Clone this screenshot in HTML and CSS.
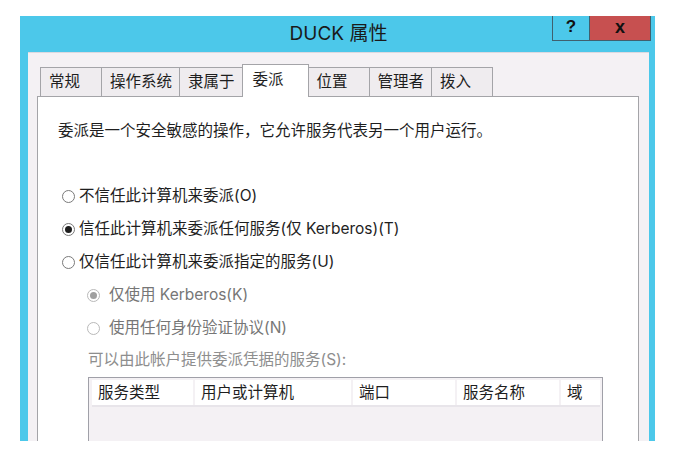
FILE: index.html
```html
<!DOCTYPE html>
<html lang="zh-CN">
<head>
<meta charset="utf-8">
<title>DUCK 属性</title>
<link rel="stylesheet" href="styles.css">
</head>
<body>
<div class="window">
  <div class="titlebar">
    <div class="spacer"></div>
    <div class="title">DUCK 属性</div>
    <div class="controls">
      <div class="btn help">?</div>
      <div class="btn close">x</div>
    </div>
  </div>
  <div class="panel">
    <div class="tabs">
      <div class="tab">常规</div>
      <div class="tab">操作系统</div>
      <div class="tab">隶属于</div>
      <div class="tab active">委派</div>
      <div class="tab">位置</div>
      <div class="tab">管理者</div>
      <div class="tab">拨入</div>
    </div>
    <div class="page">
      <p class="desc">委派是一个安全敏感的操作，它允许服务代表另一个用户运行。</p>
      <div class="options">
        <div class="opt"><span class="radio"></span>不信任此计算机来委派(O)</div>
        <div class="opt"><span class="radio checked"></span>信任此计算机来委派任何服务(仅 Kerberos)(T)</div>
        <div class="opt"><span class="radio"></span>仅信任此计算机来委派指定的服务(U)</div>
        <div class="opt sub disabled"><span class="radio checked"></span>仅使用 Kerberos(K)</div>
        <div class="opt sub disabled"><span class="radio"></span>使用任何身份验证协议(N)</div>
      </div>
      <div class="label">可以由此帐户提供委派凭据的服务(S):</div>
      <div class="table">
        <div class="thead">
          <div class="th">服务类型</div>
          <div class="th">用户或计算机</div>
          <div class="th">端口</div>
          <div class="th">服务名称</div>
          <div class="th">域</div>
        </div>
        <div class="tbody"></div>
      </div>
    </div>
  </div>
</div>
</body>
</html>
```
FILE: styles.css
```css
html, body {
  margin: 0;
  padding: 0;
  background: #ffffff;
}
body {
  font-family: "Inter", "Noto Sans CJK SC", sans-serif;
  color: #1e1e1e;
}
.window {
  margin: 16px 0 0 20px;
  width: 635px;
  height: 425px;
  background: #4cc8ea;
  overflow: hidden;
  display: flex;
  flex-direction: column;
}
.titlebar {
  height: 36px;
  display: grid;
  grid-template-columns: 1fr auto 1fr;
  flex: none;
}
.title {
  font-size: 19px;
  line-height: 36px;
  color: #1a1a1a;
  padding-left: 2px;
}
.controls {
  justify-self: end;
  align-self: start;
  display: flex;
  margin-right: 4px;
  border: 1px solid #40606e;
  border-top: none;
}
.btn {
  height: 24px;
  line-height: 22px;
  text-align: center;
  font-family: "Liberation Sans", sans-serif;
  font-weight: bold;
  color: #111;
}
.help {
  width: 36px;
  font-size: 17px;
  border-right: 1px solid #40606e;
  background: #4cc8ea;
}
.close {
  width: 60px;
  font-size: 18px;
  background: #c75050;
}
.panel {
  flex: 1;
  margin: 0 6px 0 8px;
  background: #f4f1f4;
  border-top: 1px solid #dcd9e0;
  padding: 11px 10px 0 9px;
  display: flex;
  flex-direction: column;
}
.tabs {
  display: flex;
  align-items: flex-end;
  height: 32px;
  padding-left: 3px;
  flex: none;
}
.tab {
  box-sizing: border-box;
  height: 29px;
  min-width: 62px;
  padding: 0 7px 0 8px;
  font-size: 15.5px;
  line-height: 28px;
  background: #efecef;
  border: 1px solid #a4a4a8;
  border-bottom: none;
  margin-right: -1px;
  white-space: nowrap;
}
.tab.active {
  position: relative;
  z-index: 1;
  height: 33px;
  min-width: 67px;
  padding-left: 10px;
  line-height: 30px;
  background: #ffffff;
  margin-bottom: -1px;
  margin-right: -1px;
}
.page {
  flex: 1;
  background: #ffffff;
  border: 1px solid #a4a4a8;
  border-bottom: none;
  font-size: 15.5px;
}
.desc {
  margin: 24px 0 0 20px;
  line-height: 20px;
}
.options {
  margin-top: 45px;
  display: flex;
  flex-direction: column;
  gap: 13px;
}
.opt {
  display: flex;
  align-items: center;
  line-height: 20px;
  margin-left: 24px;
  white-space: nowrap;
}
.opt.sub {
  margin-left: 49px;
}
.opt.disabled {
  color: #767676;
}
.radio {
  box-sizing: border-box;
  width: 13px;
  height: 13px;
  border: 1px solid #7a7a7a;
  border-radius: 50%;
  background: #fff;
  margin-right: 4px;
  display: flex;
  align-items: center;
  justify-content: center;
  flex: none;
}
.opt.sub .radio {
  margin-right: 9px;
}
.radio.checked::after {
  content: "";
  width: 7px;
  height: 7px;
  border-radius: 50%;
  background: #1e1e1e;
}
.disabled .radio {
  border-color: #b9b9b9;
}
.disabled .radio.checked::after {
  background: #a0a0a0;
}
.label {
  margin: 12px 0 0 50px;
  line-height: 20px;
  color: #8e8e8e;
}
.table {
  margin: 7px 0 0 50px;
  width: 515px;
  box-sizing: border-box;
  height: 80px;
  border: 1px solid #a0a0a8;
  border-bottom: none;
  background: #f4f1f4;
  padding: 2px 2px 0 3px;
}
.thead {
  display: grid;
  grid-template-columns: 101px 156px 102px 102px 1fr;
  gap: 2px;
  border-bottom: 2px solid #e8e5ea;
}
.th {
  background: #ffffff;
  height: 25px;
  line-height: 25px;
  padding-left: 6px;
  font-size: 15.5px;
  white-space: nowrap;
}
```
